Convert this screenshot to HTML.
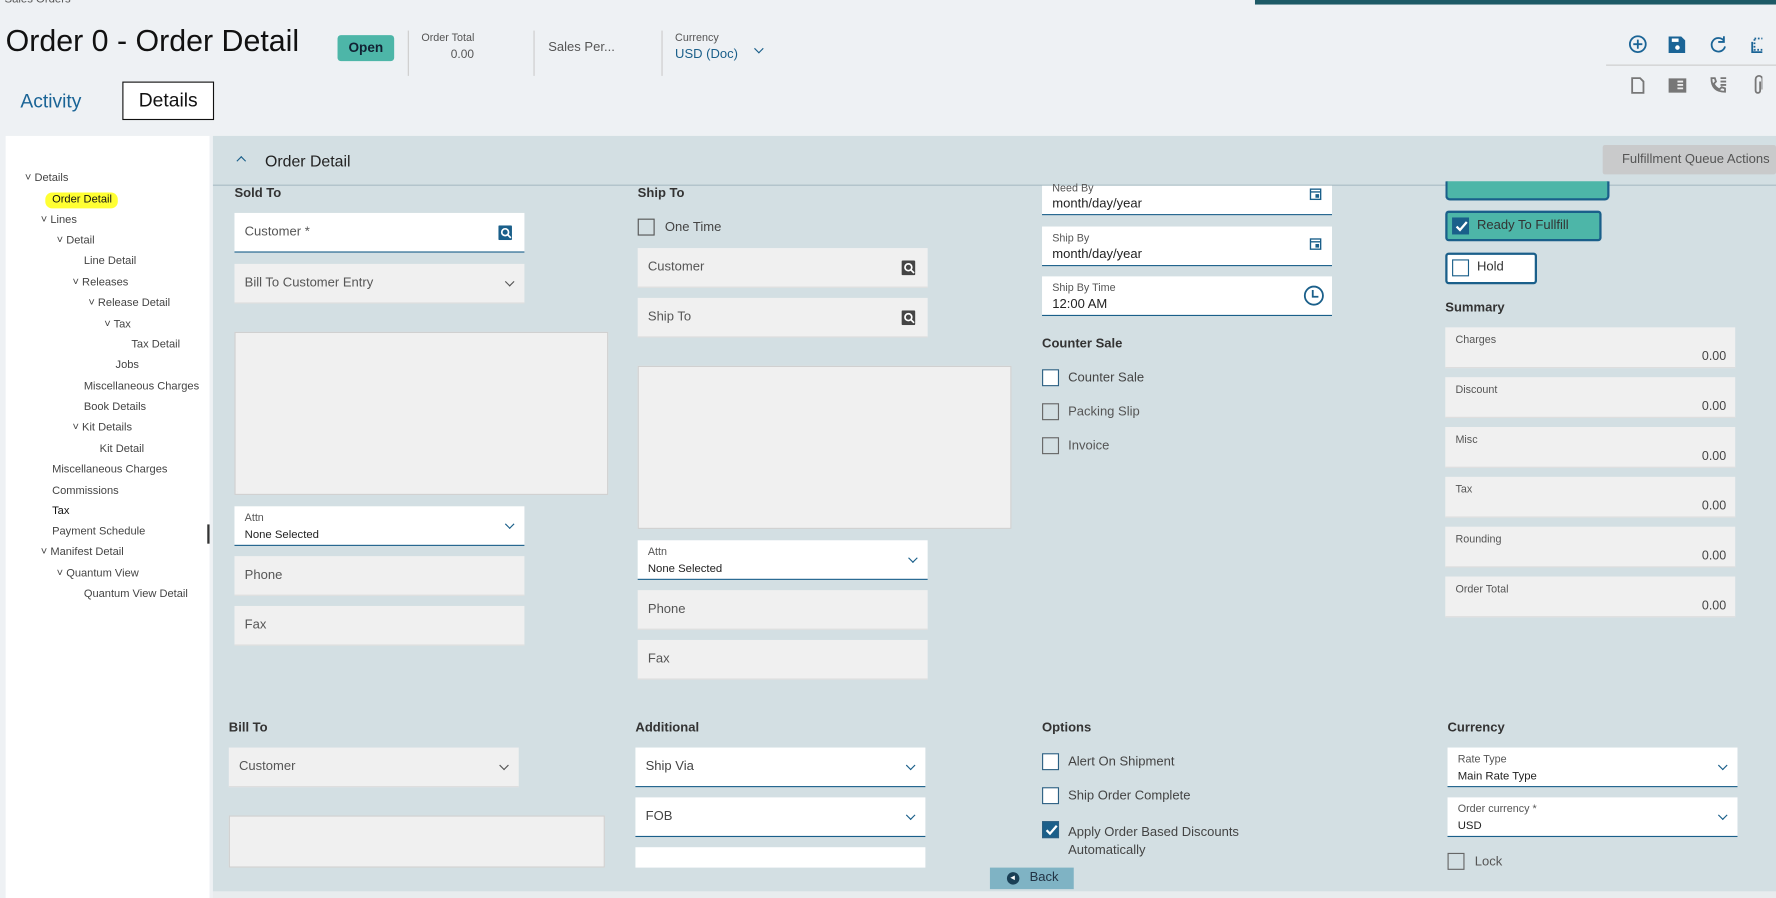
<!DOCTYPE html><html><head><meta charset="utf-8"><style>
*{box-sizing:border-box;margin:0;padding:0}
html,body{width:1776px;height:898px;overflow:hidden;background:#eef1f4;font-family:"Liberation Sans",sans-serif}
#w{position:absolute;left:0;top:0;width:1568px;height:793px;transform:scale(1.13265);transform-origin:0 0;background:#eef1f4}
.a{position:absolute}
.t{position:absolute;font-size:11px;color:#333;white-space:nowrap}
.f{position:absolute;background:#f0f0f0;border-bottom:1px solid #ddd;font-size:11.5px;color:#555;padding-left:9px;display:flex;align-items:center}
.wh{position:absolute;background:#fff;border-bottom:1.5px solid #1a5f8a;font-size:11.5px;color:#444;padding-left:9px;display:flex;align-items:center}
.lab{position:absolute;font-size:9.5px;color:#555;left:9px;top:5px}
.val{position:absolute;font-size:11.5px;color:#222;left:9px;bottom:3px}
.h{position:absolute;font-size:11.5px;font-weight:bold;color:#333}
.cb{position:absolute;width:15px;height:15px;border:1.5px solid #2b5f82;background:#fff}
.cbl{position:absolute;font-size:11.5px;color:#444}
.chev{position:absolute;right:10px;top:50%;width:6px;height:6px;border-right:1.5px solid #1a5f8a;border-bottom:1.5px solid #1a5f8a;transform:translateY(-70%) rotate(45deg)}
.chevg{border-color:#555}
.tr{position:absolute;font-size:9.8px;color:#444;white-space:nowrap}
.sum{position:absolute;left:1276px;width:256px;height:36px;background:#f0f0f0;border-bottom:1px solid #ddd}
.sum .lab{font-size:9.5px;top:6px}
.sum .v{position:absolute;right:8px;bottom:3px;font-size:11px;color:#444}
</style></head><body><div id="w">
<div class="a" style="left:1108px;top:0;width:460px;height:4px;background:#1d5a66"></div>
<div class="t" style="left:4px;top:-6px;font-size:10px;color:#555">Sales Orders</div>
<div class="a" style="left:5px;top:21px;font-size:26.8px;color:#111">Order 0 - Order Detail</div>
<div class="a" style="left:298px;top:31px;width:50px;height:23px;background:#4db6a8;border-radius:3px;font-size:12px;font-weight:bold;color:#123;text-align:center;line-height:23px">Open</div>
<div class="a" style="left:360px;top:27px;width:1px;height:40px;background:#ccc"></div>
<div class="t" style="left:372px;top:28px;font-size:9.5px;color:#555">Order Total</div>
<div class="t" style="left:398px;top:42px;font-size:10.5px;color:#555">0.00</div>
<div class="a" style="left:471px;top:27px;width:1px;height:40px;background:#ccc"></div>
<div class="t" style="left:484px;top:36px;font-size:11.5px;color:#555">Sales Per...</div>
<div class="a" style="left:584px;top:27px;width:1px;height:40px;background:#ccc"></div>
<div class="t" style="left:596px;top:28px;font-size:9.5px;color:#555">Currency</div>
<div class="t" style="left:596px;top:42px;font-size:11.5px;color:#1a5f8a">USD (Doc)</div>
<div class="a" style="left:667px;top:40px;width:6px;height:6px;border-right:1.5px solid #1a5f8a;border-bottom:1.5px solid #1a5f8a;transform:rotate(45deg)"></div>
<div class="t" style="left:18px;top:80px;font-size:17px;color:#1a6496">Activity</div>
<div class="a" style="left:108px;top:72px;width:81px;height:34px;border:1px solid #111;background:#fff;font-size:17px;color:#111;text-align:center;line-height:32px">Details</div>
<svg class="a" style="left:1436px;top:30px" width="120" height="60" viewBox="0 0 120 60" fill="none" stroke="#1a6496" stroke-width="1.6">
<circle cx="10" cy="9" r="7"/><path d="M10 5v8M6 9h8"/>
<path d="M38 3h10l3 3v10H38z" fill="#1a6496"/><circle cx="45" cy="12" r="2" fill="#fff" stroke="none"/><rect x="40" y="4" width="6" height="3" fill="#fff" stroke="none"/>
<path d="M86 6a6 6 0 1 0 1 5M86 2v5h-5"/>
<rect x="113" y="4" width="9" height="10" stroke-dasharray="1.5 1.5"/><path d="M111 7v9h9"/>
<path d="M5 39h7l3 3v10H5z" stroke="#777"/>
<rect x="38" y="40" width="14" height="11" fill="#777" stroke="#777"/><path d="M45 42h5M45 45h5M45 48h5" stroke="#eee"/>
<path d="M75 39c0 8 4 12 12 12l0-3-3-1-2 2c-2-1-4-3-5-5l2-2-1-3z" stroke="#777"/><path d="M83 39h5M83 42h5M83 45h5" stroke="#777"/>
<path d="M118 42v8a2 2 0 0 1-4 0v-10a3 3 0 0 1 6 0v9" stroke="#777"/>
</svg>
<div class="a" style="left:1418px;top:57px;width:150px;height:1px;background:#ccc"></div>
<div class="a" style="left:5px;top:120px;width:180px;height:673px;background:#fff"></div>
<div class="a" style="left:183px;top:463px;width:2px;height:17px;background:#333"></div>
<div class="tr" style="left:22px;top:152px">˅ Details</div>
<div class="a" style="left:40px;top:170px;width:64px;height:14px;background:#ffff33;border-radius:6px"></div>
<div class="tr" style="left:46px;top:171px;color:#111">Order Detail</div>
<div class="tr" style="left:36px;top:189px">˅ Lines</div>
<div class="tr" style="left:50px;top:207px">˅ Detail</div>
<div class="tr" style="left:74px;top:225px">Line Detail</div>
<div class="tr" style="left:64px;top:244px">˅ Releases</div>
<div class="tr" style="left:78px;top:262px">˅ Release Detail</div>
<div class="tr" style="left:92px;top:281px">˅ Tax</div>
<div class="tr" style="left:116px;top:299px">Tax Detail</div>
<div class="tr" style="left:102px;top:317px">Jobs</div>
<div class="tr" style="left:74px;top:336px">Miscellaneous Charges</div>
<div class="tr" style="left:74px;top:354px">Book Details</div>
<div class="tr" style="left:64px;top:372px">˅ Kit Details</div>
<div class="tr" style="left:88px;top:391px">Kit Detail</div>
<div class="tr" style="left:46px;top:409px">Miscellaneous Charges</div>
<div class="tr" style="left:46px;top:428px">Commissions</div>
<div class="tr" style="left:46px;top:446px;color:#111">Tax</div>
<div class="tr" style="left:46px;top:464px">Payment Schedule</div>
<div class="tr" style="left:36px;top:482px">˅ Manifest Detail</div>
<div class="tr" style="left:50px;top:501px">˅ Quantum View</div>
<div class="tr" style="left:74px;top:519px">Quantum View Detail</div>
<div class="a" style="left:188px;top:120px;width:1380px;height:667px;background:#d3dfe3"></div>
<div class="a" style="left:188px;top:787px;width:1380px;height:6px;background:#e8ecee"></div>
<div class="a" style="left:188px;top:163px;width:1380px;height:1px;background:#a9bcc4"></div>
<div class="a" style="left:210px;top:139px;width:6px;height:6px;border-left:1.5px solid #1a5f8a;border-top:1.5px solid #1a5f8a;transform:rotate(45deg)"></div>
<div class="t" style="left:234px;top:134px;font-size:14px;color:#222">Order Detail</div>
<div class="a" style="left:1415px;top:128px;width:153px;height:26px;background:#c9cacb;border-radius:2px;font-size:11.5px;color:#555;line-height:26px;padding-left:17px;white-space:nowrap">Fulfillment Queue Actions</div>
<div class="h" style="left:207px;top:165px">Sold To</div>
<div class="wh" style="left:207px;top:188px;width:256px;height:35px;color:#555">Customer *
<svg class="a" style="right:10px;top:11px" width="13" height="13"><rect x="0" y="0" width="12" height="13" rx="1" fill="#1a5f8a"/><circle cx="6" cy="6" r="3" stroke="#fff" stroke-width="1.5" fill="none"/><path d="M8 8l3 3" stroke="#fff" stroke-width="1.5"/></svg></div>
<div class="f" style="left:207px;top:233px;width:256px;height:35px">Bill To Customer Entry<div class="chev chevg"></div></div>
<div class="a" style="left:207px;top:293px;width:330px;height:144px;background:#f0f0f0;border:1px solid #d0d0d0"></div>
<div class="wh" style="left:207px;top:447px;width:256px;height:35px"><span class="lab">Attn</span><span class="val" style="font-size:10px">None Selected</span><div class="chev"></div></div>
<div class="f" style="left:207px;top:491px;width:256px;height:35px">Phone</div>
<div class="f" style="left:207px;top:535px;width:256px;height:35px">Fax</div>
<div class="h" style="left:563px;top:165px">Ship To</div>
<div class="cb" style="left:563px;top:193px;border-color:#555;background:transparent"></div>
<div class="cbl" style="left:587px;top:195px">One Time</div>
<div class="f" style="left:563px;top:219px;width:256px;height:35px">Customer<svg class="a" style="right:10px;top:11px" width="13" height="13"><rect width="12" height="13" rx="1" fill="#444"/><circle cx="6" cy="6" r="3" stroke="#fff" stroke-width="1.5" fill="none"/><path d="M8 8l3 3" stroke="#fff" stroke-width="1.5"/></svg></div>
<div class="f" style="left:563px;top:263px;width:256px;height:35px">Ship To<svg class="a" style="right:10px;top:11px" width="13" height="13"><rect width="12" height="13" rx="1" fill="#444"/><circle cx="6" cy="6" r="3" stroke="#fff" stroke-width="1.5" fill="none"/><path d="M8 8l3 3" stroke="#fff" stroke-width="1.5"/></svg></div>
<div class="a" style="left:563px;top:323px;width:330px;height:144px;background:#f0f0f0;border:1px solid #d0d0d0"></div>
<div class="wh" style="left:563px;top:477px;width:256px;height:35px"><span class="lab">Attn</span><span class="val" style="font-size:10px">None Selected</span><div class="chev"></div></div>
<div class="f" style="left:563px;top:521px;width:256px;height:35px">Phone</div>
<div class="f" style="left:563px;top:565px;width:256px;height:35px">Fax</div>
<div class="wh" style="left:920px;top:164px;width:256px;height:26px"><span class="lab" style="top:-3px">Need By</span><span class="val">month/day/year</span></div>
<div class="wh" style="left:920px;top:200px;width:256px;height:35px"><span class="lab">Ship By</span><span class="val">month/day/year</span></div>
<div class="wh" style="left:920px;top:244px;width:256px;height:35px"><span class="lab">Ship By Time</span><span class="val">12:00 AM</span>
<svg class="a" style="right:6px;top:7px" width="20" height="20" fill="none" stroke="#1a5f8a" stroke-width="1.6"><circle cx="10" cy="10" r="8"/><path d="M9 5v6h5"/></svg></div>
<svg class="a" style="left:1156px;top:166px" width="12" height="60" fill="none" stroke="#1a5f8a" stroke-width="1.2"><rect x="1" y="1" width="9" height="9"/><path d="M1 3.5h9"/><rect x="6" y="6" width="2" height="2" fill="#1a5f8a"/><rect x="1" y="45" width="9" height="9"/><path d="M1 47.5h9"/><rect x="6" y="50" width="2" height="2" fill="#1a5f8a"/></svg>
<div class="h" style="left:920px;top:298px">Counter Sale</div>
<div class="cb" style="left:920px;top:326px"></div><div class="cbl" style="left:943px;top:328px">Counter Sale</div>
<div class="cb" style="left:920px;top:356px;border-color:#666;background:transparent"></div><div class="cbl" style="left:943px;top:358px;color:#555">Packing Slip</div>
<div class="cb" style="left:920px;top:386px;border-color:#666;background:transparent"></div><div class="cbl" style="left:943px;top:388px;color:#555">Invoice</div>
<div class="a" style="left:1276px;top:160px;width:145px;height:17px;background:#4db6a8;border:2px solid #1a5f8a;border-top:none;border-radius:0 0 4px 4px"></div>
<div class="a" style="left:1276px;top:186px;width:138px;height:27px;background:#4db6a8;border:2px solid #1a5f8a;border-radius:3px"></div>
<div class="a" style="left:1282px;top:192px;width:15px;height:15px;background:#1a5f8a"></div>
<svg class="a" style="left:1284px;top:194px" width="12" height="12" fill="none" stroke="#fff" stroke-width="2"><path d="M2 6l3 3 6-7"/></svg>
<div class="cbl" style="left:1304px;top:193px;color:#333">Ready To Fullfill</div>
<div class="a" style="left:1276px;top:223px;width:81px;height:28px;background:#fff;border:2px solid #1a5f8a;border-radius:3px"></div>
<div class="cb" style="left:1282px;top:229px;border-color:#1a5f8a"></div>
<div class="cbl" style="left:1304px;top:230px;color:#333">Hold</div>
<div class="h" style="left:1276px;top:266px">Summary</div>
<div class="sum" style="top:289px"><span class="lab">Charges</span><span class="v">0.00</span></div>
<div class="sum" style="top:333px"><span class="lab">Discount</span><span class="v">0.00</span></div>
<div class="sum" style="top:377px"><span class="lab">Misc</span><span class="v">0.00</span></div>
<div class="sum" style="top:421px"><span class="lab">Tax</span><span class="v">0.00</span></div>
<div class="sum" style="top:465px"><span class="lab">Rounding</span><span class="v">0.00</span></div>
<div class="sum" style="top:509px"><span class="lab">Order Total</span><span class="v">0.00</span></div>
<div class="h" style="left:202px;top:637px">Bill To</div>
<div class="f" style="left:202px;top:660px;width:256px;height:35px">Customer<div class="chev chevg"></div></div>
<div class="a" style="left:202px;top:720px;width:332px;height:46px;background:#f0f0f0;border:1px solid #d0d0d0"></div>
<div class="h" style="left:561px;top:637px">Additional</div>
<div class="wh" style="left:561px;top:660px;width:256px;height:35px">Ship Via<div class="chev"></div></div>
<div class="wh" style="left:561px;top:704px;width:256px;height:35px">FOB<div class="chev"></div></div>
<div class="a" style="left:561px;top:748px;width:256px;height:18px;background:#fff"></div>
<div class="h" style="left:920px;top:637px">Options</div>
<div class="cb" style="left:920px;top:665px"></div><div class="cbl" style="left:943px;top:667px">Alert On Shipment</div>
<div class="cb" style="left:920px;top:695px"></div><div class="cbl" style="left:943px;top:697px">Ship Order Complete</div>
<div class="cb" style="left:920px;top:725px;background:#1a5f8a"></div>
<svg class="a" style="left:922px;top:727px" width="12" height="12" fill="none" stroke="#fff" stroke-width="2"><path d="M2 6l3 3 6-7"/></svg>
<div class="cbl" style="left:943px;top:727px;line-height:16px">Apply Order Based Discounts<br>Automatically</div>
<div class="h" style="left:1278px;top:637px">Currency</div>
<div class="wh" style="left:1278px;top:660px;width:256px;height:35px"><span class="lab">Rate Type</span><span class="val" style="font-size:10px">Main Rate Type</span><div class="chev"></div></div>
<div class="wh" style="left:1278px;top:704px;width:256px;height:35px"><span class="lab">Order currency *</span><span class="val" style="font-size:10px">USD</span><div class="chev"></div></div>
<div class="cb" style="left:1278px;top:753px;border-color:#666;background:transparent"></div><div class="cbl" style="left:1302px;top:755px;color:#555">Lock</div>
<div class="a" style="left:874px;top:766px;width:74px;height:19px;background:#7fb3c4;font-size:11.5px;color:#234;line-height:19px;padding-left:35px">Back</div>
<div class="a" style="left:889px;top:770px;width:11px;height:11px;border-radius:50%;background:#1a3f55"></div>
<div class="a" style="left:892px;top:773px;width:0;height:0;border-top:2.5px solid transparent;border-bottom:2.5px solid transparent;border-right:4px solid #fff"></div>
</div></body></html>
